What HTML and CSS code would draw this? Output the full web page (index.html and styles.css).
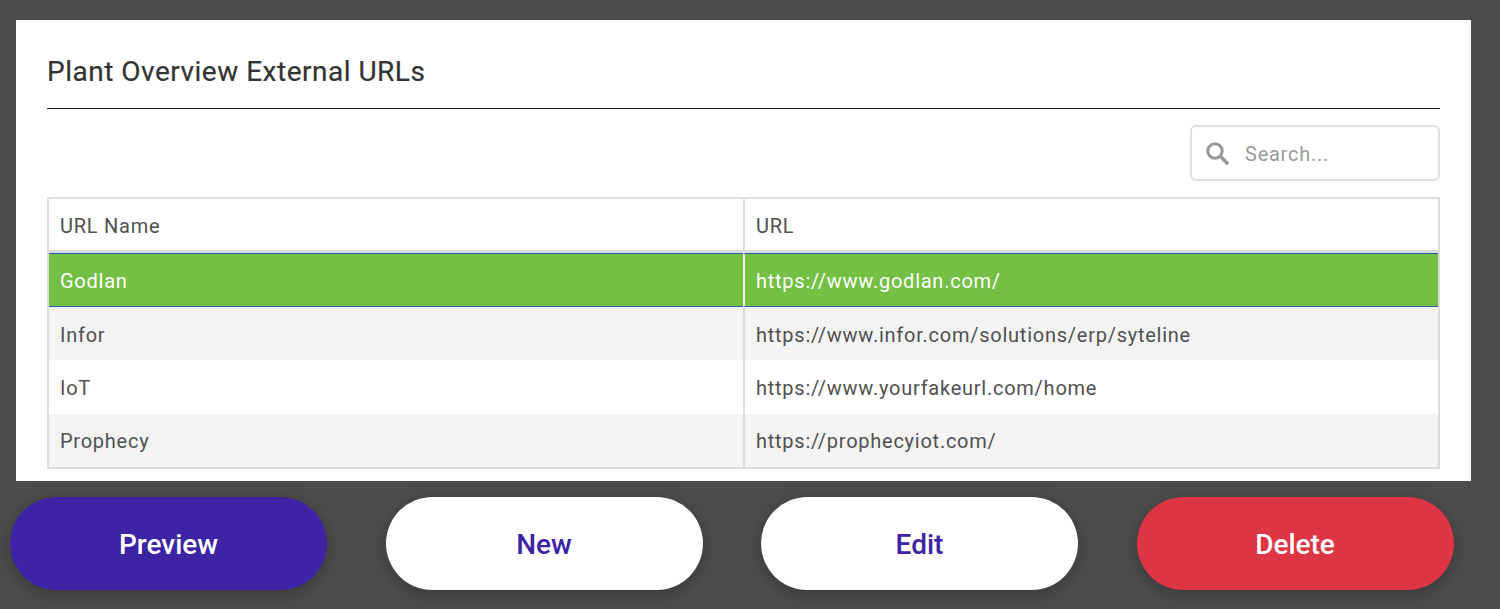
FILE: index.html
```html
<!DOCTYPE html>
<html lang="en">
<head>
<meta charset="utf-8">
<title>Plant Overview External URLs</title>
<link rel="stylesheet" href="styles.css">
</head>
<body>
<main class="page">
  <section class="card">
    <h1 class="title">Plant Overview External URLs</h1>
    <div class="toolbar">
      <label class="search">
        <svg class="search-icon" viewBox="0 0 24 24" width="24" height="24" aria-hidden="true"><circle cx="10" cy="10" r="7.2" fill="none" stroke="#999" stroke-width="3"/><path d="M15.5 15.5 L22 22" stroke="#999" stroke-width="3.6" stroke-linecap="round"/></svg>
        <input class="search-input" type="text" placeholder="Search...">
      </label>
    </div>
    <table class="grid">
      <thead>
        <tr><th>URL Name</th><th>URL</th></tr>
      </thead>
      <tbody>
        <tr class="selected"><td>Godlan</td><td>https://www.godlan.com/</td></tr>
        <tr class="odd"><td>Infor</td><td>https://www.infor.com/solutions/erp/syteline</td></tr>
        <tr class="tall"><td>IoT</td><td>https://www.yourfakeurl.com/home</td></tr>
        <tr class="odd last"><td>Prophecy</td><td>https://prophecyiot.com/</td></tr>
      </tbody>
    </table>
  </section>
  <div class="actions">
    <button class="btn btn-primary">Preview</button>
    <button class="btn btn-plain">New</button>
    <button class="btn btn-plain">Edit</button>
    <button class="btn btn-danger">Delete</button>
  </div>
</main>
</body>
</html>
```
FILE: styles.css
```css
* { box-sizing: border-box; }
html, body { margin: 0; height: 100%; overflow: hidden; }
body { background: #4c4c4c; font-family: Roboto, "Liberation Sans", sans-serif; color: #444; }
.page { padding: 20px 0 0 0; }
.card { margin: 0 29px 0 16px; height: 461px; background: #fff; padding: 31px 31px 0 31px; }
.title { margin: 0; height: 58px; border-bottom: 1px solid #222; font-size: 28px; line-height: 41px; font-weight: 400; letter-spacing: 0.5px; color: #333; -webkit-text-stroke: 0.2px #333; }
.toolbar { display: flex; justify-content: flex-end; padding-top: 16px; }
.search { display: flex; align-items: center; width: 250px; height: 56px; border: 2px solid #e0e0e0; border-radius: 6px; padding-left: 13px; background: #fff; }
.search-icon { flex: none; }
.search-input { flex: 1; min-width: 0; border: 0; outline: 0; margin: 2px 0 0 14px; font: 400 20px Roboto, sans-serif; letter-spacing: 0.75px; background: transparent; color: #999; }
.search-input::placeholder { color: #999; opacity: 1; }
.grid { width: 100%; margin-top: 16px; border-collapse: separate; border-spacing: 0; table-layout: fixed; border: 2px solid #dcdcdc; font-size: 20px; letter-spacing: 0.75px; }
.grid th, .grid td { text-align: left; font-weight: 400; padding: 2px 0 0 11px; color: #505050; }
.grid th:first-child { width: 694px; }
.grid th + th, .grid td + td { border-left: 2px solid #dcdcdc; }
.grid th { height: 54px; border-bottom: 3px solid #d8dde6; }
.grid td { height: 53px; }
.odd td { background: #f4f4f4; }
.tall td { height: 54px; }
.grid .last td { padding-top: 0; }
.grid .selected td { background: #73c045; color: #fff; border-top: 1px solid #2a5fa8; border-bottom: 1px solid #2a5fa8; height: 54px; padding-top: 1px; }
.grid .selected td + td { border-left: 2px solid #e6f2de; }
.actions { display: flex; gap: 58.5px; padding: 16px 0 0 10px; }
.btn { width: 317px; height: 93px; border: 0; border-radius: 47px; font: 500 28px Roboto, sans-serif; box-shadow: 0 4px 16px rgba(0,0,0,0.25); padding: 2px 0 0; }
.btn-primary { background: #3c24a4; color: #fff; }
.btn-plain { background: #fff; color: #3c24a4; }
.btn-danger { background: #dd3545; color: #fff; }
```
